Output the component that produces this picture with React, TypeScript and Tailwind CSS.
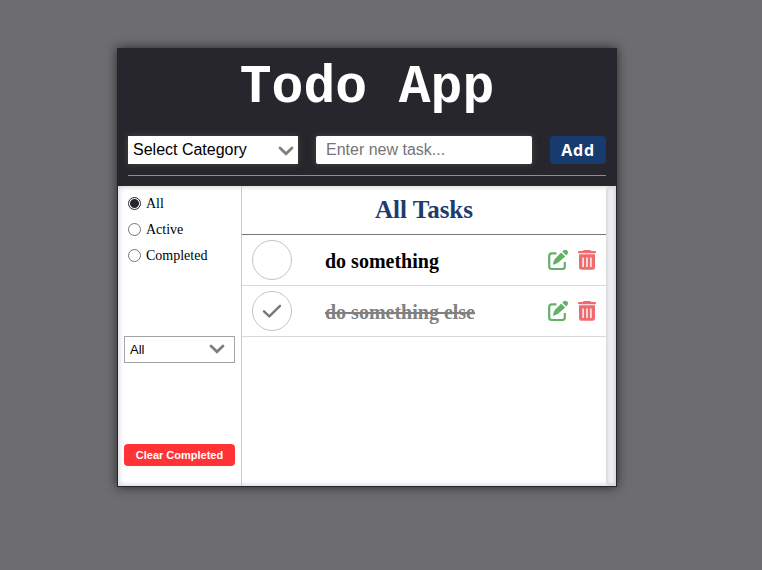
import { useState } from "react";

type Task = { id: number; text: string; done: boolean };

const initialTasks: Task[] = [
  { id: 1, text: "do something", done: false },
  { id: 2, text: "do something else", done: true },
];

const filters = ["All", "Active", "Completed"];

function Chevron({ className }: { className: string }) {
  return (
    <svg
      aria-hidden="true"
      viewBox="0 0 16 10"
      className={className}
      fill="none"
      stroke="#7f7f7f"
      strokeWidth="2.8"
      strokeLinecap="round"
    >
      <path d="M2 2 L8 7.800 L14 2" />
    </svg>
  );
}

function EditIcon() {
  return (
    <svg aria-hidden="true" viewBox="0 0 22 22" className="h-[22px] w-[22px]">
      <path
        d="M9.500 4.400H4.600A2.400 2.400 0 0 0 2.200 6.800v10.800A2.400 2.400 0 0 0 4.600 20h10.800a2.400 2.400 0 0 0 2.400-2.400V13"
        fill="none"
        stroke="#63b168"
        strokeWidth="2.200"
      />
      <path d="M14.200 3.400 L18.200 7.400 L11.400 13.600 Q8.600 15.500 5.800 15.800 Q6.200 12.800 7.800 9.900 Z" fill="#63b168" />
      <path d="M15.300 2.500 L16.600 1.300 Q18.500 0 20.300 1.500 Q21.900 3.400 20.500 5.100 L19.200 6.400 Z" fill="#63b168" />
    </svg>
  );
}

function TrashIcon() {
  return (
    <svg aria-hidden="true" viewBox="0 0 20 22" className="h-[22px] w-5">
      <path d="M1.800 2 H5.500 Q6.500 0.900 7.500 0.900 H12.500 Q13.500 0.900 14.500 2 H18.200 Q19 2 19 3.100 Q19 4.200 18.200 4.200 H1.800 Q1 4.200 1 3.100 Q1 2 1.800 2 Z" fill="#ee6b6e" />
      <path
        fillRule="evenodd"
        d="M2 5.200 H18 V18.400 A2.400 2.400 0 0 1 15.600 20.800 H4.400 A2.400 2.400 0 0 1 2 18.400 Z M5.400 8.400 V18 H6.800 V8.400 Z M9.300 8.400 V18 H10.700 V8.400 Z M13.200 8.400 V18 H14.600 V8.400 Z"
        fill="#ee6b6e"
      />
    </svg>
  );
}

export default function App() {
  const [tasks, setTasks] = useState(initialTasks);
  const [filter, setFilter] = useState("All");
  const [draft, setDraft] = useState("");

  const toggle = (id: number) => setTasks(tasks.map((t) => (t.id === id ? { ...t, done: !t.done } : t)));
  const remove = (id: number) => setTasks(tasks.filter((t) => t.id !== id));
  const visible = tasks.filter((t) => filter === "All" || (filter === "Completed") === t.done);

  return (
    <div className="min-h-screen bg-[#6d6d6f] pt-12 pr-7 font-['Liberation_Serif',serif] text-black">
      <main className="mx-auto w-full max-w-[500px] border-x border-b border-[#27262c] bg-[#27262c] shadow-[0_0_10px_#27262c]">
        <header className="px-2.5 pb-2.5">
          <h1 className="pt-1 pb-3 text-center font-['Liberation_Mono',monospace] text-[53px] leading-[72px] font-bold text-white">
            Todo App
          </h1>
          <form
            className="flex h-10 items-start border-b border-[#8d8d90]"
            onSubmit={(e) => {
              e.preventDefault();
              if (draft.trim()) setTasks([...tasks, { id: Date.now(), text: draft, done: false }]);
              setDraft("");
            }}
          >
            <div className="relative w-[170px]">
              <select
                aria-label="Task category"
                className="h-7 w-full appearance-none bg-white pl-[5px] font-['Liberation_Sans',sans-serif] text-base leading-7 shadow-[0_0_6px_#4a4a4a]"
              >
                <option>Select Category</option>
              </select>
              <Chevron className="pointer-events-none absolute top-[10px] right-1 h-[10px] w-4" />
            </div>
            <input
              type="text"
              aria-label="New task"
              placeholder="Enter new task..."
              value={draft}
              onChange={(e) => setDraft(e.target.value)}
              className="mx-[18px] h-7 min-w-0 flex-1 rounded-xs bg-white px-2.5 font-['Liberation_Sans',sans-serif] text-base shadow-[0_0_6px_#4a4a4a] placeholder:text-[#757575]"
            />
            <button
              type="submit"
              className="h-7 w-14 rounded bg-[#183b6f] font-['Open_Sans',sans-serif] text-base font-bold tracking-wider text-white"
            >
              Add
            </button>
          </form>
        </header>

        <div className="flex h-[300px] bg-white shadow-[inset_0_0_6px_#c4c4cc]">
          <aside className="flex w-[124px] flex-col border-r border-[#cccccc] px-1.5 pt-1">
            <fieldset className="h-[146px] pl-1">
              {filters.map((name) => (
                <label key={name} className="flex h-[26px] items-center gap-[5px] text-sm">
                  <input
                    type="radio"
                    name="status"
                    checked={filter === name}
                    onChange={() => setFilter(name)}
                    className="h-[13px] w-[13px] appearance-none rounded-full border border-[#767676] bg-white checked:border-[#27262c] checked:bg-[radial-gradient(circle,#27262c_4px,white_5px)]"
                  />
                  <span className="pt-0.5">{name}</span>
                </label>
              ))}
            </fieldset>
            <div className="relative">
              <select
                aria-label="Filter by category"
                className="block h-[27px] w-full appearance-none border border-[#a5a5a5] bg-white pl-[5px] font-['Liberation_Sans',sans-serif] text-[13px]"
              >
                <option>All</option>
              </select>
              <Chevron className="pointer-events-none absolute top-2 right-2.5 h-[10px] w-4" />
            </div>
            <button
              type="button"
              onClick={() => setTasks(tasks.filter((t) => !t.done))}
              className="mt-auto mb-5 h-[22px] rounded bg-[#ff3336] font-['Liberation_Sans',sans-serif] text-[11px] font-bold text-white"
            >
              Clear Completed
            </button>
          </aside>

          <section className="min-w-0 flex-1">
            <h2 className="h-[49px] border-b border-[#77777a] text-center text-[25px] leading-[48px] font-bold text-[#1d3c6e]">
              {filter} Tasks
            </h2>
            <ul>
              {visible.map((task) => (
                <li key={task.id} className="flex h-[51px] items-center border-b border-[#d8d8d8] pr-[9px] pl-2.5">
                  <button
                    type="button"
                    aria-label={`Toggle ${task.text}`}
                    onClick={() => toggle(task.id)}
                    className="grid h-10 w-10 place-items-center rounded-full border border-[#c4c4c4]"
                  >
                    {task.done && (
                      <svg
                        aria-hidden="true"
                        viewBox="0 0 20 16"
                        className="h-4 w-5"
                        fill="none"
                        stroke="#777777"
                        strokeWidth="2.400"
                        strokeLinecap="round"
                      >
                        <path d="M2 8.300 L7.300 13.300 L18 2.800" />
                      </svg>
                    )}
                  </button>
                  <span
                    className={
                      task.done
                        ? "ml-[33px] flex-1 pt-0.5 text-xl font-bold text-[#808080] line-through"
                        : "ml-[33px] flex-1 pt-0.5 text-xl font-bold"
                    }
                  >
                    {task.text}
                  </span>
                  <button type="button" aria-label={`Edit ${task.text}`}>
                    <EditIcon />
                  </button>
                  <button type="button" aria-label={`Delete ${task.text}`} onClick={() => remove(task.id)} className="ml-2">
                    <TrashIcon />
                  </button>
                </li>
              ))}
            </ul>
          </section>

          <div className="w-2.5 rounded-full bg-[#eeeeee] shadow-[inset_0_0_4px_#c0c0c0]" />
        </div>
      </main>
    </div>
  );
}
